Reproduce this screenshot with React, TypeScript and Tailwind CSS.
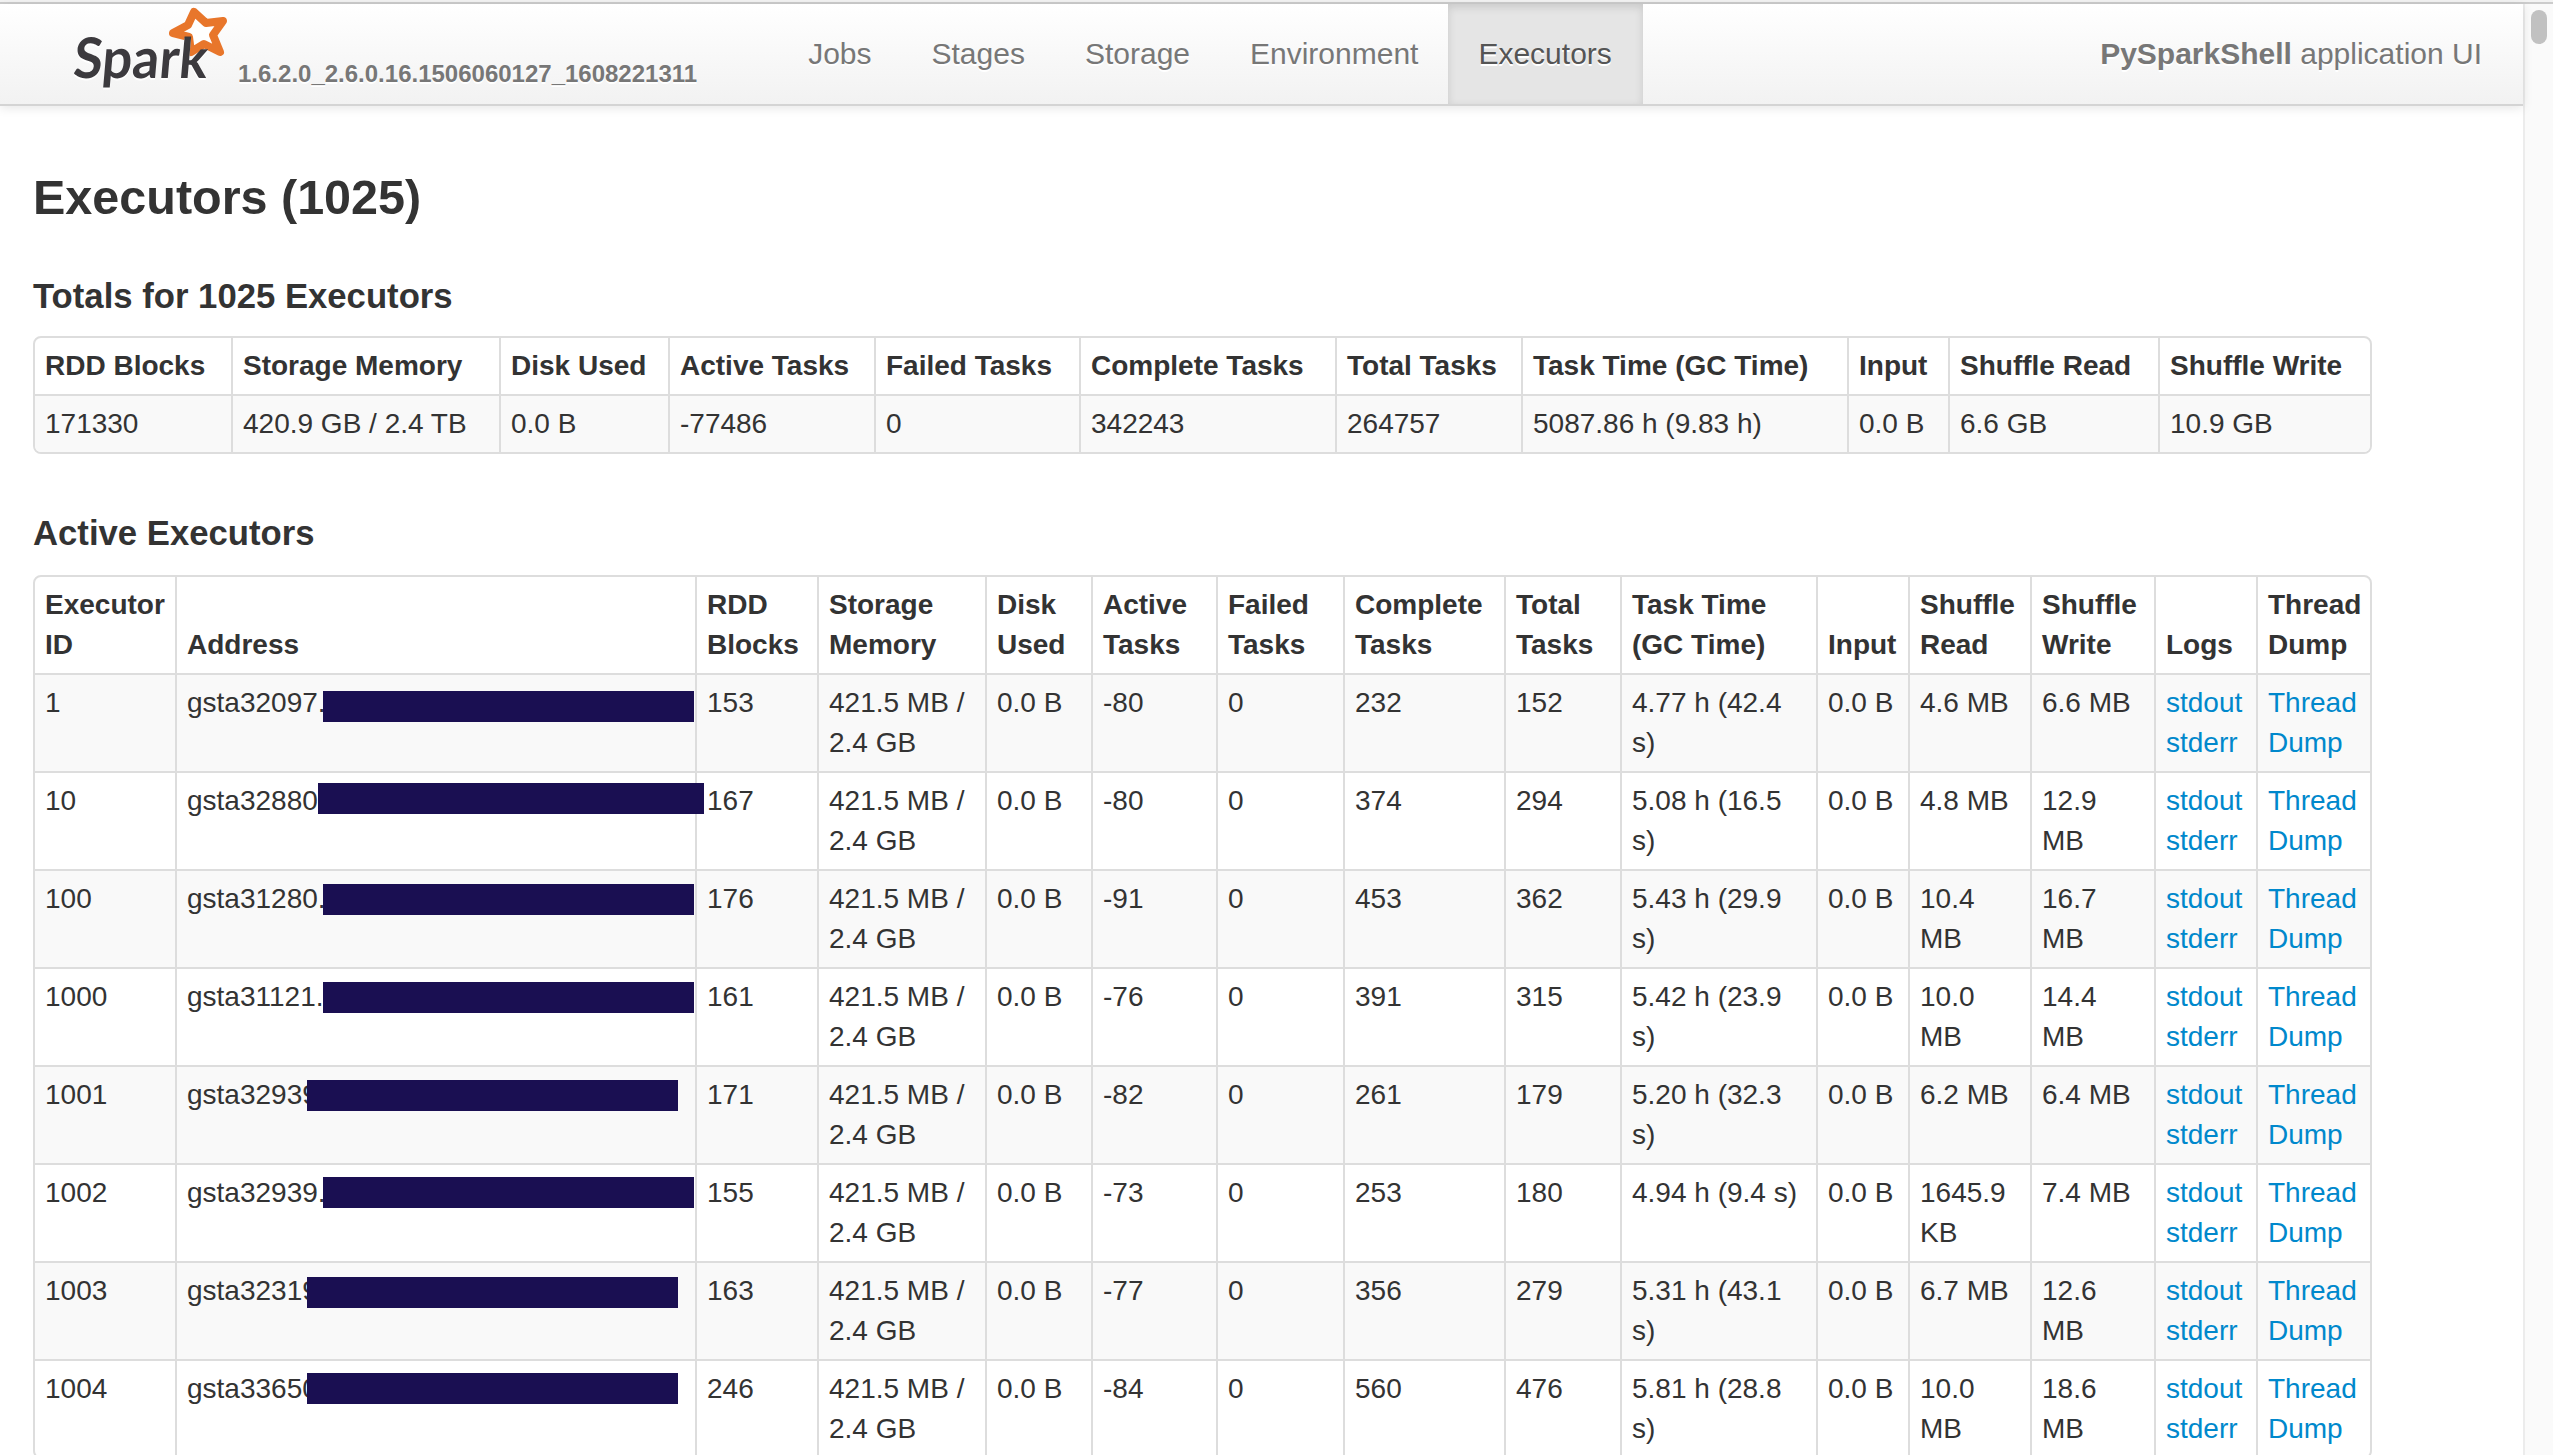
const NAV = ["Jobs", "Stages", "Storage", "Environment"];

const TOTAL_COLS = ["w-[196px]", "w-[268px]", "w-[169px]", "w-[206px]", "w-[205px]", "w-[256px]", "w-[186px]", "w-[326px]", "w-[101px]", "w-[210px]", "w-[212px]"];
const TOTAL_HEAD = ["RDD Blocks", "Storage Memory", "Disk Used", "Active Tasks", "Failed Tasks", "Complete Tasks", "Total Tasks", "Task Time (GC Time)", "Input", "Shuffle Read", "Shuffle Write"];
const TOTAL_ROW = ["171330", "420.9 GB / 2.4 TB", "0.0 B", "-77486", "0", "342243", "264757", "5087.86 h (9.83 h)", "0.0 B", "6.6 GB", "10.9 GB"];

const EXEC_COLS = ["w-[140px]", "w-[520px]", "w-[122px]", "w-[168px]", "w-[106px]", "w-[125px]", "w-[127px]", "w-[161px]", "w-[116px]", "w-[196px]", "w-[92px]", "w-[122px]", "w-[124px]", "w-[102px]", "w-[114px]"];
const EXEC_HEAD = ["Executor ID", "Address", "RDD Blocks", "Storage Memory", "Disk Used", "Active Tasks", "Failed Tasks", "Complete Tasks", "Total Tasks", "Task Time (GC Time)", "Input", "Shuffle Read", "Shuffle Write", "Logs", "Thread Dump"];

// bar = the blacked out part of the host name
const EXECUTORS = [
  { id: "1", host: "gsta32097.", bar: "left-[146px] top-[16px] w-[371px]", rdd: "153", active: "-80", done: "232", total: "152", time: "4.77 h (42.4 s)", read: "4.6 MB", write: "6.6 MB" },
  { id: "10", host: "gsta32880", bar: "left-[141px] top-[10px] w-[386px]", rdd: "167", active: "-80", done: "374", total: "294", time: "5.08 h (16.5 s)", read: "4.8 MB", write: "12.9 MB" },
  { id: "100", host: "gsta31280.", bar: "left-[146px] top-[13px] w-[371px]", rdd: "176", active: "-91", done: "453", total: "362", time: "5.43 h (29.9 s)", read: "10.4 MB", write: "16.7 MB" },
  { id: "1000", host: "gsta31121.", bar: "left-[146px] top-[13px] w-[371px]", rdd: "161", active: "-76", done: "391", total: "315", time: "5.42 h (23.9 s)", read: "10.0 MB", write: "14.4 MB" },
  { id: "1001", host: "gsta32939", bar: "left-[130px] top-[13px] w-[371px]", rdd: "171", active: "-82", done: "261", total: "179", time: "5.20 h (32.3 s)", read: "6.2 MB", write: "6.4 MB" },
  { id: "1002", host: "gsta32939.", bar: "left-[146px] top-[12px] w-[371px]", rdd: "155", active: "-73", done: "253", total: "180", time: "4.94 h (9.4 s)", read: "1645.9 KB", write: "7.4 MB" },
  { id: "1003", host: "gsta32319", bar: "left-[130px] top-[14px] w-[371px]", rdd: "163", active: "-77", done: "356", total: "279", time: "5.31 h (43.1 s)", read: "6.7 MB", write: "12.6 MB" },
  { id: "1004", host: "gsta33650", bar: "left-[130px] top-[12px] w-[371px]", rdd: "246", active: "-84", done: "560", total: "476", time: "5.81 h (28.8 s)", read: "10.0 MB", write: "18.6 MB" },
];

const TH = "px-[10px] py-[8px] text-left align-bottom font-bold border-l-2 border-[#dddddd] first:border-l-0";
const TD = "px-[10px] py-[8px] align-top border-l-2 border-t-2 border-[#dddddd] first:border-l-0";

function SparkLogo() {
  return (
    <svg viewBox="0 4 178 100" className="w-[178px] h-[100px] shrink-0">
      <polygon
        points="134,12 146,23 163,21 153,35 160,52 144,44 131,52 129,37 113,33 128,25"
        fill="#ffffff"
        stroke="#e8762b"
        strokeWidth="8"
        strokeLinejoin="round"
      />
      <text
        x="19"
        y="78"
        textLength="134"
        lengthAdjust="spacingAndGlyphs"
        fill="#3c3a3e"
        transform="skewX(-5)"
        className="font-['Lato',sans-serif] font-bold text-[56px]"
      >
        Spark
      </text>
    </svg>
  );
}

function Navbar() {
  return (
    <div className="relative z-10 flex h-[102px] border-b-2 border-[#d4d4d4] bg-gradient-to-b from-white to-[#f2f2f2] shadow-[0_2px_10px_rgba(0,0,0,0.1)] text-[30px] text-[#777777] [text-shadow:0_2px_0_#ffffff]">
      <div className="w-[60px] shrink-0" />
      <SparkLogo />
      <span className="self-end mb-[10px] text-[24px] leading-[40px] font-bold text-[#777777] whitespace-nowrap">
        1.6.2.0_2.6.0.16.1506060127_1608221311
      </span>
      <div className="ml-[81px] flex">
        {NAV.map((n) => (
          <a key={n} className="flex items-center px-[30px]">{n}</a>
        ))}
        <a className="flex items-center pl-[30px] pr-[31px] bg-[#e5e5e5] text-[#555555] shadow-[inset_0_3px_8px_rgba(0,0,0,0.125)]">Executors</a>
      </div>
      <div className="ml-auto pr-[41px] flex items-center whitespace-nowrap">
        <strong className="font-bold">PySparkShell</strong>&nbsp;application UI
      </div>
    </div>
  );
}

function TotalsTable() {
  return (
    <div className="w-[2339px] rounded-[8px] border-2 border-[#dddddd] overflow-hidden">
      <table className="w-full table-fixed border-separate border-spacing-0">
        <colgroup>
          {TOTAL_COLS.map((c, i) => <col key={i} className={c} />)}
        </colgroup>
        <thead>
          <tr>{TOTAL_HEAD.map((h) => <th key={h} className={TH}>{h}</th>)}</tr>
        </thead>
        <tbody>
          <tr className="bg-[#f9f9f9]">
            {TOTAL_ROW.map((v, i) => <td key={i} className={TD}>{v}</td>)}
          </tr>
        </tbody>
      </table>
    </div>
  );
}

function ExecutorsTable() {
  return (
    <div className="w-[2339px] rounded-[8px] border-2 border-[#dddddd] overflow-hidden">
      <table className="w-full table-fixed border-separate border-spacing-0">
        <colgroup>
          {EXEC_COLS.map((c, i) => <col key={i} className={c} />)}
        </colgroup>
        <thead>
          <tr>{EXEC_HEAD.map((h) => <th key={h} className={TH}>{h}</th>)}</tr>
        </thead>
        <tbody>
          {EXECUTORS.map((e) => (
            <tr key={e.id} className="odd:bg-[#f9f9f9]">
              <td className={TD}>{e.id}</td>
              <td className={TD + " relative"}>
                {e.host}
                <span className={"absolute h-[31px] bg-[#1a0f52] " + e.bar} />
              </td>
              <td className={TD}>{e.rdd}</td>
              <td className={TD}>421.5 MB / 2.4 GB</td>
              <td className={TD}>0.0 B</td>
              <td className={TD}>{e.active}</td>
              <td className={TD}>0</td>
              <td className={TD}>{e.done}</td>
              <td className={TD}>{e.total}</td>
              <td className={TD}>{e.time}</td>
              <td className={TD}>0.0 B</td>
              <td className={TD}>{e.read}</td>
              <td className={TD}>{e.write}</td>
              <td className={TD + " text-[#0088cc]"}>
                <a>stdout</a><br /><a>stderr</a>
              </td>
              <td className={TD + " text-[#0088cc]"}>
                <a>Thread Dump</a>
              </td>
            </tr>
          ))}
        </tbody>
      </table>
    </div>
  );
}

export default function App() {
  return (
    <div className="h-[1455px] overflow-hidden flex flex-col bg-white font-['Liberation_Sans',Arial,sans-serif] text-[28px] leading-[40px] text-[#333333]">
      <div className="h-[4px] shrink-0 bg-[#f3f3f3] border-b-2 border-[#cccccc]" />
      <div className="flex flex-1 min-h-0">
        <div className="flex-1 min-w-0">
          <Navbar />
          <div className="pl-[33px] pt-[51px]">
            <h3 className="text-[48.5px] leading-[80px] font-bold">Executors (1025)</h3>
            <h4 className="mt-[39px] mb-[20px] text-[34.7px] leading-[40px] font-bold">Totals for 1025 Executors</h4>
            <TotalsTable />
            <h4 className="mt-[59px] mb-[22px] text-[34.7px] leading-[40px] font-bold">Active Executors</h4>
            <ExecutorsTable />
          </div>
        </div>
        {/* window scrollbar */}
        <div className="w-[30px] shrink-0 bg-[#fafafa] border-l-2 border-[#ececec]">
          <div className="mt-[6px] ml-[6px] w-[16px] h-[34px] rounded-[8px] bg-[#c1c1c1]" />
        </div>
      </div>
    </div>
  );
}
